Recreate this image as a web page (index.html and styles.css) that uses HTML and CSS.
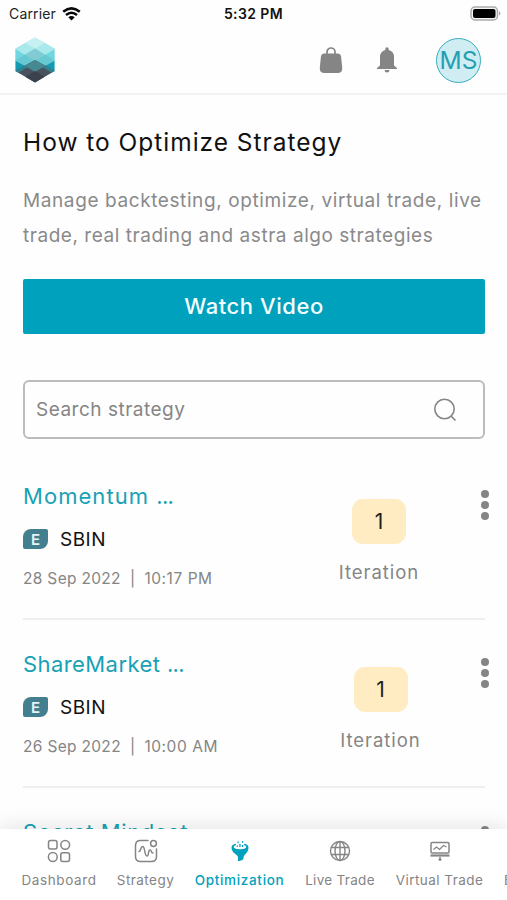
FILE: index.html
```html
<!DOCTYPE html>
<html lang="en">
<head>
<meta charset="utf-8">
<title>Optimization</title>
<link rel="stylesheet" href="styles.css">
</head>
<body>
<div class="app">
  <div class="status">
    <div class="carrier"><span>Carrier</span>
      <svg width="19" height="14" viewBox="0 0 19 14"><g fill="none" stroke="#080808" stroke-width="2.5"><path d="M1.2 4.8Q9.5-2 17.8 4.8"/><path d="M4 8Q9.500 3.400 15 8"/></g><path d="M6.300 10.200Q9.500 7.700 12.700 10.200L9.500 13.600Z" fill="#080808"/></svg>
    </div>
    <div class="clock">5:32 PM</div>
    <svg class="battery" width="31" height="16" viewBox="0 0 31 16"><rect x="1" y="1" width="26.500" height="13" rx="4" fill="#f5f5f5" stroke="#aaa" stroke-width="1.500"/><rect x="3" y="3" width="22.500" height="9" rx="2"/><path d="M29 5.300Q32 7.500 29 9.700Z" fill="#aaa"/></svg>
  </div>
  <header class="header">
    <svg class="logo" width="40" height="46" viewBox="0 0 40 46">
      <defs><clipPath id="hex"><path d="M20 .5 39.500 11.500V34L20 45.500 .5 34V11.500Z"/></clipPath></defs>
      <g clip-path="url(#hex)">
        <path fill="#93e2e6" d="M0 0h40v46H0z"/>
        <path fill="#c6f0f1" d="M20 0 30 6 20 12 10 6Z"/>
        <path fill="#a9e9eb" d="M10 6 20 12 10 18 0 12ZM30 6 40 12 30 18 20 12Z"/>
        <path fill="#70d6df" d="M0 12 10 18 0 24ZM40 12 30 18 40 24Z"/>
        <path fill="#82cbd3" d="M20 11.500 30 17.500 20 23.500 10 17.500Z"/>
        <path fill="#67c9d1" d="M10 17.500 20 23.500 10 29.500 0 23.500ZM30 17.500 40 23.500 30 29.500 20 23.500Z"/>
        <path fill="#149bb3" d="M0 23.500 10 29 0 35ZM40 23.500 30 29 40 35Z"/>
        <path fill="#48515d" d="M0 34 20 23 40 34V46H0Z"/>
        <path fill="#34818e" d="M0 34 10 28.500 13 30 3 36ZM40 34 30 28.500 27 30 37 36Z"/>
        <path fill="#478990" d="M20 23 30 29 20 35 10 29Z"/>
        <path fill="#3b424d" d="M20 34 30 40 20 46 10 40Z"/>
      </g>
    </svg>
    <div class="actions">
      <svg width="24" height="27" viewBox="0 0 24 27"><path d="M8 8V5a4 4 0 0 1 8 0v3" fill="none" stroke="#858585" stroke-width="1.700"/><path d="M5 6.500h14Q21.500 6.500 22 9l1.200 11.500Q23.700 26 18.500 26h-13Q.3 26 .8 20.500L2 9Q2.500 6.500 5 6.500Z" fill="#858585"/></svg>
      <svg class="bell" width="20" height="26" viewBox="0 0 20 26"><path d="M8.300 3V2a1.700 1.700 0 0 1 3.400 0v1Q17 4.500 17 10v8.500L20 21v1H0v-1l3-2.500V10Q3 4.500 8.300 3ZM7.500 23h5Q12.300 25.500 10 25.500T7.500 23Z" fill="#858585"/></svg>
      <div class="avatar"><span>MS</span></div>
    </div>
  </header>
  <main class="content">
    <h1>How to Optimize Strategy</h1>
    <p class="intro"><span class="intro-a">Manage backtesting, optimize, virtual trade, live</span><br><span class="intro-b">trade, real trading and astra algo strategies</span></p>
    <button class="watch">Watch Video</button>
    <div class="search"><span>Search strategy</span>
      <svg width="24" height="24" viewBox="0 0 24 24" fill="none" stroke="#858585" stroke-width="1.600"><circle cx="11.500" cy="11" r="9.700"/><path d="m18 18 4.500 4.500"/></svg>
    </div>
    <section class="row">
      <div class="info">
        <h2 class="momentum">Momentum <span>...</span></h2>
        <div class="symbol"><b>E</b><span>SBIN</span></div>
        <div class="date"><span>28 Sep 2022</span><span>|</span><span class="time">10:17 PM</span></div>
      </div>
      <div class="iteration"><div class="count">1</div><span>Iteration</span></div>
      <div class="dots"><i></i><i></i><i></i></div>
    </section>
    <section class="row second">
      <div class="info">
        <h2 class="share">ShareMarket <span>...</span></h2>
        <div class="symbol"><b>E</b><span>SBIN</span></div>
        <div class="date"><span>26 Sep 2022</span><span>|</span><span class="time">10:00 AM</span></div>
      </div>
      <div class="iteration"><div class="count">1</div><span>Iteration</span></div>
      <div class="dots"><i></i><i></i><i></i></div>
    </section>
    <section class="row">
      <div class="info"><h2 class="secret">Secret Mindset</h2></div>
      <div class="dots"><i></i><i></i><i></i></div>
    </section>
  </main>
  <nav class="nav">
    <div class="tab dash"><svg width="24" height="24" viewBox="0 0 24 24" fill="none" stroke="#858585" stroke-width="1.500"><rect x="1.500" y="1.500" width="8.500" height="8.500" rx="2"/><circle cx="18.200" cy="5.800" r="4.400"/><circle cx="5.800" cy="18" r="4.400"/><rect x="13.800" y="13.700" width="8.700" height="8.700" rx="2"/></svg><span>Dashboard</span></div>
    <div class="tab strat"><svg width="24" height="24" viewBox="0 0 24 24" fill="none" stroke="#858585" stroke-width="1.500" stroke-linecap="round"><path d="M14 1.500H6.500Q1.500 1.500 1.500 6.500v11q0 5 5 5h11q5 0 5-5V10"/><circle cx="19.500" cy="4.500" r="2.900"/><path d="M5 12.500c2 0 1.500-5 3.500-5 3 0 1.500 9.500 4.500 9.500 2.500 0 .5-6 3-6 2 0 .5 3 3 3"/></svg><span>Strategy</span></div>
    <div class="tab optim"><svg width="24" height="24" viewBox="0 0 24 24" fill="#00a1bd"><path d="M3.500 8.500C3.500 6.500 5 5.300 8 4.700V6C6.500 6.500 5.800 7 5.800 8c0 3 12.400 3 12.400 0 0-1-.7-1.500-2.200-2V4.700c3 .6 4.500 1.800 4.500 3.800 0 6-5 6.500-5 10.500 0 1.800-2.500 3-5.500 3v-3.500C10 15 3.500 14.500 3.500 8.500Z"/><path d="M11.300 5h1.300v3h-1.300zM8.700 6.500H10v1.300H8.700zM14 6h1.300v2H14zM9.500 2.500h1.200v1.700H9.500zM14 2h1.200v1.700H14z"/></svg><span>Optimization</span></div>
    <div class="tab live"><svg width="24" height="24" viewBox="0 0 24 24" fill="none" stroke="#858585" stroke-width="1.400"><circle cx="12" cy="12" r="9.500"/><ellipse cx="12" cy="12" rx="5" ry="9.500"/><path d="M12 2.500v19M3.300 8.500h17.400M3.300 15.500h17.400"/></svg><span>Live Trade</span></div>
    <div class="tab virt"><svg width="24" height="24" viewBox="0 0 24 24" fill="none" stroke="#858585" stroke-width="1.500"><rect x="3" y="3.500" width="18" height="10.500" rx="1.200"/><path d="m5.500 10.500 3-2.500 3 2.500 4-4 3 1.500" stroke-width="1.200"/><path d="M2.500 16.500h19" stroke-width="2.200"/><path d="M12 18v4M10.500 20.500h3"/></svg><span>Virtual Trade</span></div>
    <div class="tab last"><svg width="8" height="24"></svg><span>E</span></div>
  </nav>
</div>
</body>
</html>
```

FILE: styles.css
```css
* { box-sizing: border-box; }
body { margin: 0; background: #fff; font-family: Inter, "Open Sans", sans-serif; color: #111; }
.app { width: 507px; height: 900px; overflow: hidden; display: flex; flex-direction: column; background: #fefefe; }
svg { display: block; flex: none; }
h1, h2, p { margin: 0; font-weight: 400; }
span { white-space: nowrap; }

.status { height: 27px; flex: none; display: grid; grid-template-columns: 1fr auto 1fr; align-items: center; padding: 0 6px 0 9px; }
.carrier { display: flex; align-items: center; gap: 6px; font-size: 14px; letter-spacing: .15px; color: #222; }
.clock { padding-right: 3px; font-size: 14px; font-weight: 600; letter-spacing: .4px; }
.battery { justify-self: end; }

.header { height: 68px; flex: none; display: flex; justify-content: space-between; align-items: center; padding: 0 26px 0 15px; border-bottom: 2px solid #f2f2f2; }
.actions { display: flex; align-items: center; }
.bell { margin-left: 34px; }
.avatar { width: 45px; height: 45px; margin-left: 39px; border: 1.5px solid #35aebf; border-radius: 50%; background: #cfedf2; color: #249fb4; display: flex; align-items: center; justify-content: center; font-size: 24.500px; }

.content { flex: 1; min-height: 0; overflow: hidden; padding: 30px 22px 0 23px; }
h1 { font-size: 24.500px; line-height: 34px; letter-spacing: .98px; }
.intro { margin-top: 24px; font-size: 19px; line-height: 35px; letter-spacing: .6px; color: #8a8a8a; }
.intro-b { letter-spacing: .54px; }
.watch { display: block; width: 100%; height: 55px; margin-top: 26px; padding: 0 0 2px; border: 0; border-radius: 2px; background: #00a1bd; color: #f4feff; font: 500 22px Inter, sans-serif; letter-spacing: .55px; }
.search { height: 59px; margin-top: 46px; border: 2px solid #bcbcbc; border-radius: 6px; display: flex; align-items: center; justify-content: space-between; padding: 1px 26px 1px 11px; font-size: 19px; letter-spacing: .5px; color: #858585; }

.row { height: 168px; display: grid; grid-template-columns: 288px 136px 1fr; border-bottom: 2px solid #efefef; }
.content .search + .row { margin-top: 13px; }
.info { padding-top: 29px; }
h2 { font-size: 22px; line-height: 30px; letter-spacing: .6px; color: #18a1b5; white-space: nowrap; }
.momentum { letter-spacing: 1.050px; }
.share { letter-spacing: .42px; }
h2 span { letter-spacing: -.7px; }
.symbol { height: 24px; margin-top: 16px; display: flex; align-items: center; gap: 12px; font-size: 19px; letter-spacing: .5px; }
.symbol b { width: 25px; height: 20px; border-radius: 8px 2px; background: #437f8e; color: #e6f4f6; display: flex; align-items: center; justify-content: center; font-size: 15px; font-weight: 600; letter-spacing: 0; }
.date { display: flex; gap: 9px; margin-top: 18px; font-size: 15.500px; line-height: 20px; letter-spacing: .32px; color: #858585; }
.time { letter-spacing: .55px; }
.iteration { padding: 47px 0 0 0; display: flex; flex-direction: column; align-items: center; font-size: 18.500px; letter-spacing: .95px; color: #858585; }
.second .iteration { padding-left: 3px; }
.count { width: 54px; height: 45px; margin-bottom: 17px; border-radius: 11px; background: #ffecc3; color: #222; display: flex; align-items: center; justify-content: center; font-size: 21px; letter-spacing: 0; }
.dots { grid-column: 3; display: flex; flex-direction: column; gap: 3px; padding: 38px 0 0 34px; }
.dots i { width: 8px; height: 8px; flex: none; border-radius: 50%; background: #858585; }

.nav { height: 71px; flex: none; z-index: 1; display: flex; gap: 20.500px; padding: 10px 0 0 21.500px; background: #fff; box-shadow: 0 -3px 18px rgba(0,0,0,.1); }
.tab { flex: none; display: flex; flex-direction: column; align-items: center; gap: 8px; font-size: 13.500px; line-height: 18px; color: #858585; }
.dash { width: 75px; letter-spacing: .6px; }
.strat { width: 57px; letter-spacing: .45px; }
.optim { width: 90px; color: #00a1bd; font-weight: 500; letter-spacing: .68px; }
.live { width: 70px; letter-spacing: .3px; }
.virt { width: 88px; letter-spacing: .45px; }
.last { align-items: flex-start; }
```
